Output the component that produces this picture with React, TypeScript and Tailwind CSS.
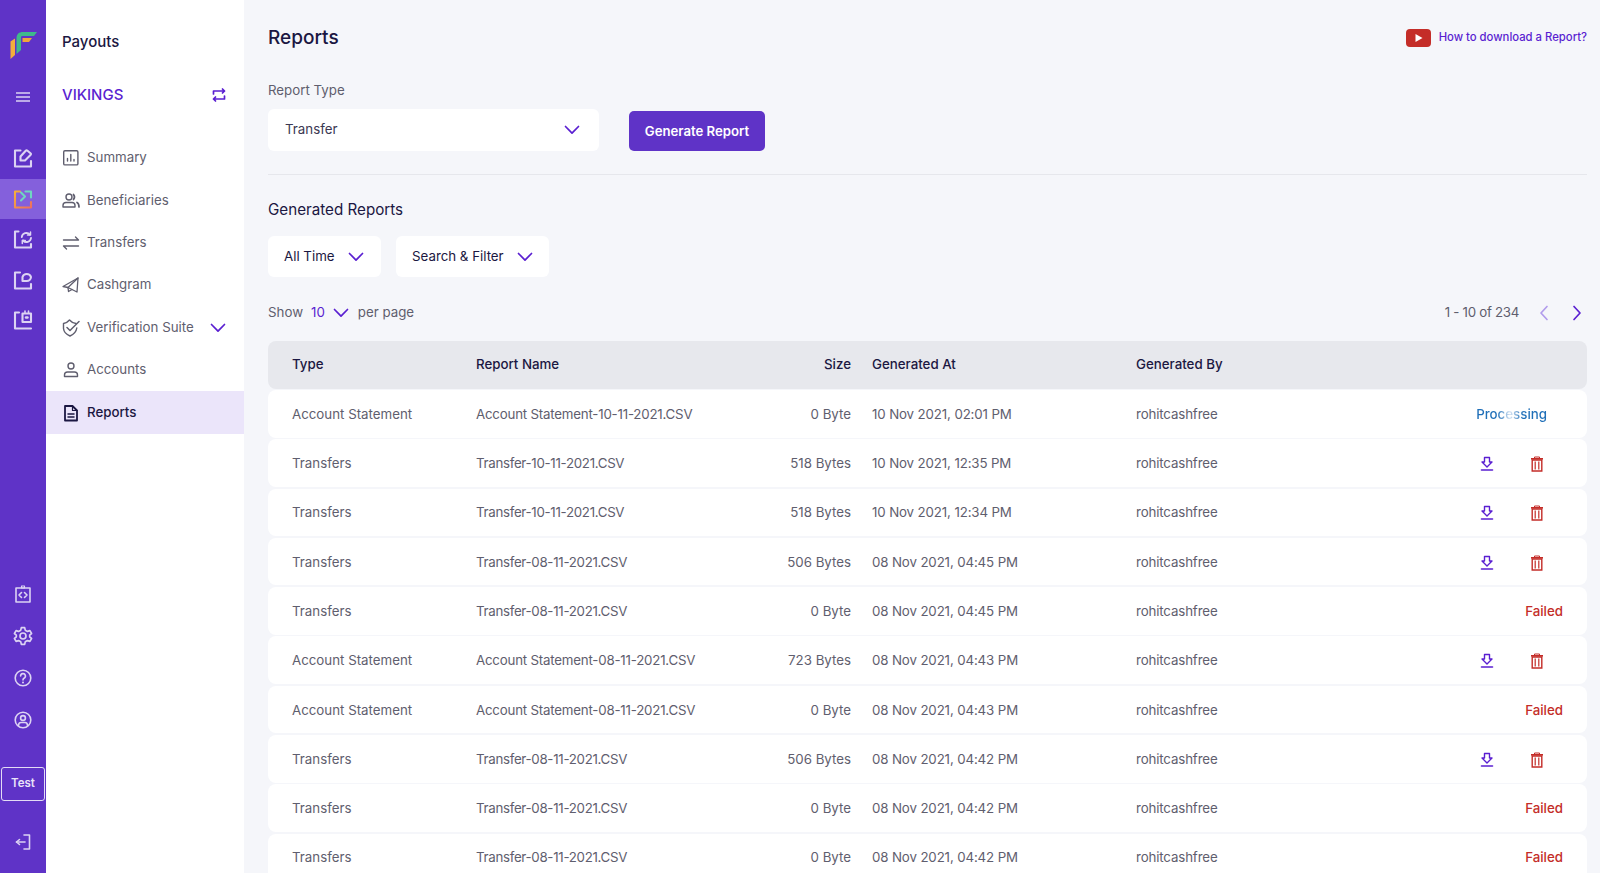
import React from 'react';

const Logo = () => (
  <svg width="27" height="28" viewBox="0 0 27 28" fill="none">
    <path d="M0.5 10.5 L5 7.5 V24 L0.5 28 Z" fill="#f2ae3d" />
    <path d="M6.5 7.5 C6.5 3 9 1 13 1 H27 L24 5 H12.5 C11.5 5 11 5.5 11 6.5 V19 L6.5 23 Z" fill="#3fb98b" />
    <path d="M12.5 7 H22 L19 11 H12.5 Z" fill="#f0a63a" />
  </svg>
);

const RailIcon = ({ children }: { children: React.ReactNode }) => (
  <svg width="20" height="20" viewBox="0 0 20 20" fill="none" stroke="#dcd3f3" strokeWidth="2.1" strokeLinecap="round" strokeLinejoin="round">
    {children}
  </svg>
);

const railTop = [
  <RailIcon key="a">
    <path d="M7.5 2.5 H2 V18.5 H18 V13" />
    <path d="M7.5 8.5 L12.5 3 Q13.5 2 14.5 2.8 L17.5 5.2 Q18.5 6 17.5 7 L12 12.5 H7.5 Z" />
  </RailIcon>,
  <svg key="b" width="20" height="20" viewBox="0 0 20 20" fill="none" strokeWidth="2.1" strokeLinecap="round" strokeLinejoin="round">
    <defs>
      <linearGradient id="railOrange" x1="0" y1="0" x2="1" y2="1">
        <stop offset="0" stopColor="#f6b03a" />
        <stop offset="1" stopColor="#ee6f5e" />
      </linearGradient>
    </defs>
    <path d="M7 2.5 H2 V18.5 H18 V13" stroke="url(#railOrange)" />
    <path d="M12.5 2.5 H18 V8.5" stroke="#6fd6c0" />
    <path d="M8 3.5 L12 7.5 L8 11.5" stroke="#6fd6c0" />
  </svg>,
  <RailIcon key="c">
    <path d="M5.5 2.5 H2 V18.5 H18 V15" />
    <path d="M8.8 8 A4.6 4.6 0 0 1 16.8 5.5" strokeWidth="1.9" />
    <path d="M18 9 A4.6 4.6 0 0 1 10 11.5" strokeWidth="1.9" />
    <path d="M17.5 3 V6 H14.5 M9.3 14.5 V11.5 H12.3" strokeWidth="1.5" />
  </RailIcon>,
  <RailIcon key="d">
    <path d="M7 2.5 H2 V18.5 H18 V14" />
    <path d="M9.5 11 V7 A4.5 4.5 0 0 1 18 7 A4.3 4.3 0 0 1 13.5 11 Z" />
  </RailIcon>,
  <RailIcon key="e">
    <path d="M6 2.5 H2 V18.5 H18" />
    <path d="M9.5 3.5 H18 V12 H9.5 Z" />
    <path d="M12 1 V2.5 M15.5 1 V2.5" strokeWidth="1.6" />
    <path d="M13 7.5 H14.5" strokeWidth="2.4" />
  </RailIcon>,
];

const railBottom = [
  <RailIcon key="a">
    <path d="M3 4 H17 V18 H3 Z" strokeWidth="1.6" />
    <path d="M8.5 2 H11.5 V4 H8.5 Z" strokeWidth="1.1" />
    <path d="M8.5 8.5 L6 11 L8.5 13.5 M11.5 8.5 L14 11 L11.5 13.5" strokeWidth="1.6" />
  </RailIcon>,
  <svg key="b" width="20" height="20" viewBox="0 0 24 24" fill="none" stroke="#dcd3f3" strokeWidth="2" strokeLinecap="round" strokeLinejoin="round">
    <path d="M10 2 H14 L14.7 5 L17.4 6.5 L20.3 5.6 L22.3 9 L20 11 V13 L22.3 15 L20.3 18.4 L17.4 17.5 L14.7 19 L14 22 H10 L9.3 19 L6.6 17.5 L3.7 18.4 L1.7 15 L4 13 V11 L1.7 9 L3.7 5.6 L6.6 6.5 L9.3 5 Z" />
    <circle cx="12" cy="12" r="3.6" />
  </svg>,
  <svg key="c" width="18" height="18" viewBox="0 0 18 18" fill="none" stroke="#dcd3f3" strokeWidth="1.6" strokeLinecap="round" strokeLinejoin="round">
    <circle cx="9" cy="9" r="7.8" />
    <path d="M6.6 7 A2.4 2.4 0 1 1 10 9.2 Q9 9.8 9 11" />
    <path d="M9 13.4 V13.5" strokeWidth="2" />
  </svg>,
  <svg key="d" width="18" height="18" viewBox="0 0 18 18" fill="none" stroke="#dcd3f3" strokeWidth="1.6" strokeLinecap="round" strokeLinejoin="round">
    <circle cx="9" cy="9" r="7.8" />
    <circle cx="9" cy="7" r="2.4" />
    <path d="M4.5 14.5 Q4.5 11.5 7 11.5 H11 Q13.5 11.5 13.5 14.5" />
  </svg>,
];

const NavIcon = ({ color = '#5f5e6e', width = 1.4, children }: { color?: string; width?: number; children: React.ReactNode }) => (
  <svg width="18" height="18" viewBox="0 0 18 18" fill="none" stroke={color} strokeWidth={width} strokeLinecap="round" strokeLinejoin="round">
    {children}
  </svg>
);

const navItems = [
  {
    label: 'Summary',
    icon: (
      <NavIcon>
        <rect x="1.7" y="1.7" width="14.2" height="14.2" rx="1.2" />
        <path d="M5.5 12 V9.5 M8.8 12 V5.5 M12 12 V10.5" />
      </NavIcon>
    ),
  },
  {
    label: 'Beneficiaries',
    icon: (
      <NavIcon>
        <circle cx="7" cy="5" r="3" />
        <path d="M1 15 V13.5 Q1 10.5 4 10.5 H10 Q13 10.5 13 13.5 V15 H1 Z" />
        <path d="M11.5 2.5 Q13.5 5 11.5 7.5" strokeWidth="1.7" />
        <path d="M15 10.5 Q17 11.5 17 15" strokeWidth="1.7" />
      </NavIcon>
    ),
  },
  {
    label: 'Transfers',
    icon: (
      <NavIcon>
        <path d="M1.5 6 H16.5 L13.5 3" />
        <path d="M16.5 12 H1.5 L4.5 15" />
      </NavIcon>
    ),
  },
  {
    label: 'Cashgram',
    icon: (
      <NavIcon width={1.3}>
        <path d="M1 10.5 L16 2 L15 16 L6 11.5 Z" />
        <path d="M6 11.5 L16 2" />
        <path d="M6 11.5 L6.5 15.5 L10 13.5" />
      </NavIcon>
    ),
  },
  {
    label: 'Verification Suite',
    caret: true,
    icon: (
      <NavIcon>
        <path d="M14 4.5 Q10 4 7.5 1 Q5 4 1.5 4.5 V9.5 Q2 14.5 8 17 Q14 14.5 14.8 9" />
        <path d="M5 8.5 L8 11.5 L17 2.5" strokeWidth="1.5" />
      </NavIcon>
    ),
  },
  {
    label: 'Accounts',
    icon: (
      <NavIcon>
        <circle cx="9" cy="5" r="3" />
        <path d="M2.5 15.5 V14 Q2.5 11 5.5 11 H12.5 Q15.5 11 15.5 14 V15.5 Z" />
      </NavIcon>
    ),
  },
  {
    label: 'Reports',
    active: true,
    icon: (
      <NavIcon color="#1b1742" width={1.8}>
        <path d="M3 2 H10.5 L15 6.5 V16.5 H3 Z" />
        <path d="M10.5 2 V6.5 H15" strokeWidth="1.2" />
        <path d="M6 10 H12 M6 13 H12" strokeWidth="1.5" />
      </NavIcon>
    ),
  },
];

const rows = [
  ['Account Statement', 'Account Statement-10-11-2021.CSV', '0 Byte', '10 Nov 2021, 02:01 PM', 'processing'],
  ['Transfers', 'Transfer-10-11-2021.CSV', '518 Bytes', '10 Nov 2021, 12:35 PM', 'ok'],
  ['Transfers', 'Transfer-10-11-2021.CSV', '518 Bytes', '10 Nov 2021, 12:34 PM', 'ok'],
  ['Transfers', 'Transfer-08-11-2021.CSV', '506 Bytes', '08 Nov 2021, 04:45 PM', 'ok'],
  ['Transfers', 'Transfer-08-11-2021.CSV', '0 Byte', '08 Nov 2021, 04:45 PM', 'failed'],
  ['Account Statement', 'Account Statement-08-11-2021.CSV', '723 Bytes', '08 Nov 2021, 04:43 PM', 'ok'],
  ['Account Statement', 'Account Statement-08-11-2021.CSV', '0 Byte', '08 Nov 2021, 04:43 PM', 'failed'],
  ['Transfers', 'Transfer-08-11-2021.CSV', '506 Bytes', '08 Nov 2021, 04:42 PM', 'ok'],
  ['Transfers', 'Transfer-08-11-2021.CSV', '0 Byte', '08 Nov 2021, 04:42 PM', 'failed'],
  ['Transfers', 'Transfer-08-11-2021.CSV', '0 Byte', '08 Nov 2021, 04:42 PM', 'failed'],
];

const Caret = ({ className = '' }: { className?: string }) => (
  <svg className={className} width="16" height="10" viewBox="0 0 16 10" fill="none" stroke="#5a1fd1" strokeWidth="1.7" strokeLinecap="round" strokeLinejoin="round">
    <path d="M1.5 1.5 L8 8.2 L14.5 1.5" />
  </svg>
);

const PageArrow = ({ color, d, className = '' }: { color: string; d: string; className?: string }) => (
  <svg className={className} width="10" height="16" viewBox="0 0 10 16" fill="none" stroke={color} strokeWidth="1.7" strokeLinecap="round" strokeLinejoin="round">
    <path d={d} />
  </svg>
);

const DownloadIcon = () => (
  <svg width="14" height="16" viewBox="0 0 14 16" fill="none" stroke="#5a1fd1" strokeWidth="1.4" strokeLinejoin="round" strokeLinecap="round">
    <path d="M4.5 1.5 H9.5 V6 H12 L7 11 L2 6 H4.5 Z" />
    <path d="M1.5 14 H12.5" strokeWidth="1.6" />
  </svg>
);

const TrashIcon = () => (
  <svg width="14" height="16" viewBox="0 0 14 16" fill="none" stroke="#c42d28" strokeWidth="1.4">
    <path d="M1 2.8 H13" strokeWidth="1.6" />
    <path d="M4.5 2.5 V1 H9.5 V2.5" strokeWidth="1" />
    <path d="M2.2 4 H11.8 V15 H2.2 Z" />
    <path d="M5.2 5.5 V13.5 M8.8 5.5 V13.5" strokeWidth="1.2" />
  </svg>
);

const gridCols = 'grid grid-cols-[184px_270px_105px_285px_214px_1fr] items-center pl-[24px]';

const App = () => {
  return (
    <div className="flex h-[873px] overflow-hidden bg-[#f5f6fa] font-['Inter',sans-serif] text-[13.3px] text-[#5f5e6e]">
      <aside className="flex w-[46px] shrink-0 flex-col items-center bg-[#5f33c7] pt-[31px]">
        <Logo />
        <svg className="mt-[33px]" width="14" height="10" viewBox="0 0 14 10" fill="none" stroke="#dcd3f3" strokeWidth="1.5">
          <path d="M0 1 H14 M0 5 H14 M0 9 H14" />
        </svg>
        <div className="mt-[36px] flex w-full flex-col items-center">
          {railTop.map((icon, i) => (
            <div key={i} className={`flex h-[40.5px] w-full items-center justify-center ${i === 1 ? 'bg-[#8460dc]' : ''}`}>
              {icon}
            </div>
          ))}
        </div>
        <div className="mt-auto flex w-full flex-col items-center">
          {railBottom.map((icon, i) => (
            <div key={i} className="flex h-[42px] w-full items-center justify-center">
              {icon}
            </div>
          ))}
          <div className="mt-[26px] flex h-[34px] w-[44px] items-center justify-center rounded-[3px] border-[1.5px] border-[#e3dcf5] text-[11.5px] font-semibold text-[#e9e3f8]">
            Test
          </div>
          <svg className="mt-[33px] mb-[23px]" width="16" height="16" viewBox="0 0 16 16" fill="none" stroke="#dcd3f3" strokeWidth="1.6" strokeLinecap="round" strokeLinejoin="round">
            <path d="M9 1 H14.5 V15 H9" />
            <path d="M1.5 8 H10" />
            <path d="M4.5 5.5 L1.5 8 L4.5 10.5" />
          </svg>
        </div>
      </aside>

      <nav className="w-[198px] shrink-0 bg-white">
        <div className="pl-[16px] pt-[32px] text-[15px] font-medium leading-[20px] text-[#1b1742]">Payouts</div>
        <div className="mt-[33px] flex items-center justify-between pl-[16px] pr-[18px]">
          <span className="text-[15px] font-medium leading-[20px] text-[#5a1fd1]">VIKINGS</span>
          <svg width="14" height="14" viewBox="0 0 14 14" fill="none" stroke="#5a1fd1" strokeWidth="1.7" strokeLinecap="round" strokeLinejoin="round">
            <path d="M1.5 6 V3 H12.5 M10.5 1 L12.5 3 L10.5 5" />
            <path d="M12.5 8 V11 H1.5 M3.5 9 L1.5 11 L3.5 13" />
          </svg>
        </div>
        <ul className="mt-[32px]">
          {navItems.map((item) => (
            <li
              key={item.label}
              className={`flex h-[42.4px] items-center pl-[16px] pr-[18px] ${item.active ? 'bg-[#ebe5fa] font-medium text-[#1b1742]' : ''}`}
            >
              <span className="flex w-[25px] shrink-0">{item.icon}</span>
              <span>{item.label}</span>
              {item.caret && <Caret className="ml-auto" />}
            </li>
          ))}
        </ul>
      </nav>

      <main className="min-w-0 flex-1 pl-[24px] pr-[13px]">
        <header className="flex items-center justify-between pt-[25px]">
          <h1 className="text-[19px] font-medium leading-[26px] text-[#1b1742]">Reports</h1>
          <div className="-mt-[1px] flex items-center gap-[8px]">
            <svg width="25" height="18" viewBox="0 0 25 18">
              <rect width="25" height="18" rx="4" fill="#c42d28" />
              <path d="M9.5 5 L16.5 9 L9.5 13 Z" fill="#fff" />
            </svg>
            <span className="text-[11.3px] font-medium text-[#5a1fd1]">How to download a Report?</span>
          </div>
        </header>

        <div className="mt-[30px] leading-[18px]">Report Type</div>
        <div className="mt-[9px] flex items-center gap-[30px]">
          <div className="flex h-[42px] w-[331px] items-center justify-between rounded-[6px] bg-white pl-[17px] pr-[19px] text-[#3b3852]">
            <span>Transfer</span>
            <Caret />
          </div>
          <button className="mt-[3px] flex h-[40px] w-[136px] items-center justify-center rounded-[5px] bg-[#5f33c7] pt-[1px] text-[13.2px] font-semibold text-white">
            Generate Report
          </button>
        </div>

        <hr className="mt-[23px] border-[#e6e7ec]" />

        <h2 className="mt-[25px] text-[15.2px] leading-[20px] text-[#1b1742]">Generated Reports</h2>

        <div className="mt-[16px] flex gap-[15px]">
          <div className="flex h-[41px] w-[113px] items-center justify-between rounded-[6px] bg-white pl-[16px] pr-[17px] text-[#1b1742]">
            All Time
            <Caret />
          </div>
          <div className="flex h-[41px] w-[153px] items-center justify-between rounded-[6px] bg-white pl-[16px] pr-[16px] text-[#1b1742]">
            Search &amp; Filter
            <Caret />
          </div>
        </div>

        <div className="mt-[25px] flex h-[22px] items-center">
          <span>Show</span>
          <span className="ml-[8px] text-[#5a1fd1]">10</span>
          <Caret className="ml-[8px]" />
          <span className="ml-[9px]">per page</span>
          <span className="ml-auto tracking-[-0.3px]">1 - 10 of 234</span>
          <PageArrow color="#b19cec" d="M8 1.5 L2 8 L8 14.5" className="ml-[20px]" />
          <PageArrow color="#5a1fd1" d="M2 1.5 L8 8 L2 14.5" className="ml-[23px] mr-[5px]" />
        </div>

        <div className={`${gridCols} mt-[17px] h-[48px] rounded-[8px] bg-[#e7e8ed] font-medium text-[#1b1742]`}>
          <span>Type</span>
          <span>Report Name</span>
          <span className="text-right">Size</span>
          <span className="pl-[21px]">Generated At</span>
          <span>Generated By</span>
        </div>

        <div className="mt-[1px] flex flex-col gap-[1.7px]">
          {rows.map((row, i) => (
            <div key={i} className={`${gridCols} h-[47.6px] shrink-0 rounded-[8px] bg-white pt-[2px]`}>
              <span>{row[0]}</span>
              <span className={row[0] === 'Transfers' ? 'tracking-[-0.3px]' : 'tracking-[-0.21px]'}>{row[1]}</span>
              <span className="text-right">{row[2]}</span>
              <span className="pl-[21px] tracking-[-0.13px]">{row[3]}</span>
              <span className="tracking-[-0.14px]">rohitcashfree</span>
              <div className="flex items-center justify-end pr-[24px]">
                {row[4] === 'processing' && (
                  <span className="mr-[16px] bg-[linear-gradient(90deg,#1f6fb8_0%,#1f6fb8_30%,#d8e6f5_48%,#1f6fb8_66%,#1f6fb8_100%)] bg-clip-text font-medium text-transparent">
                    Processing
                  </span>
                )}
                {row[4] === 'failed' && <span className="font-medium text-[#c42d28]">Failed</span>}
                {row[4] === 'ok' && (
                  <div className="flex items-center gap-[36px] pr-[19px]">
                    <DownloadIcon />
                    <TrashIcon />
                  </div>
                )}
              </div>
            </div>
          ))}
        </div>
      </main>
    </div>
  );
};

export default App;
